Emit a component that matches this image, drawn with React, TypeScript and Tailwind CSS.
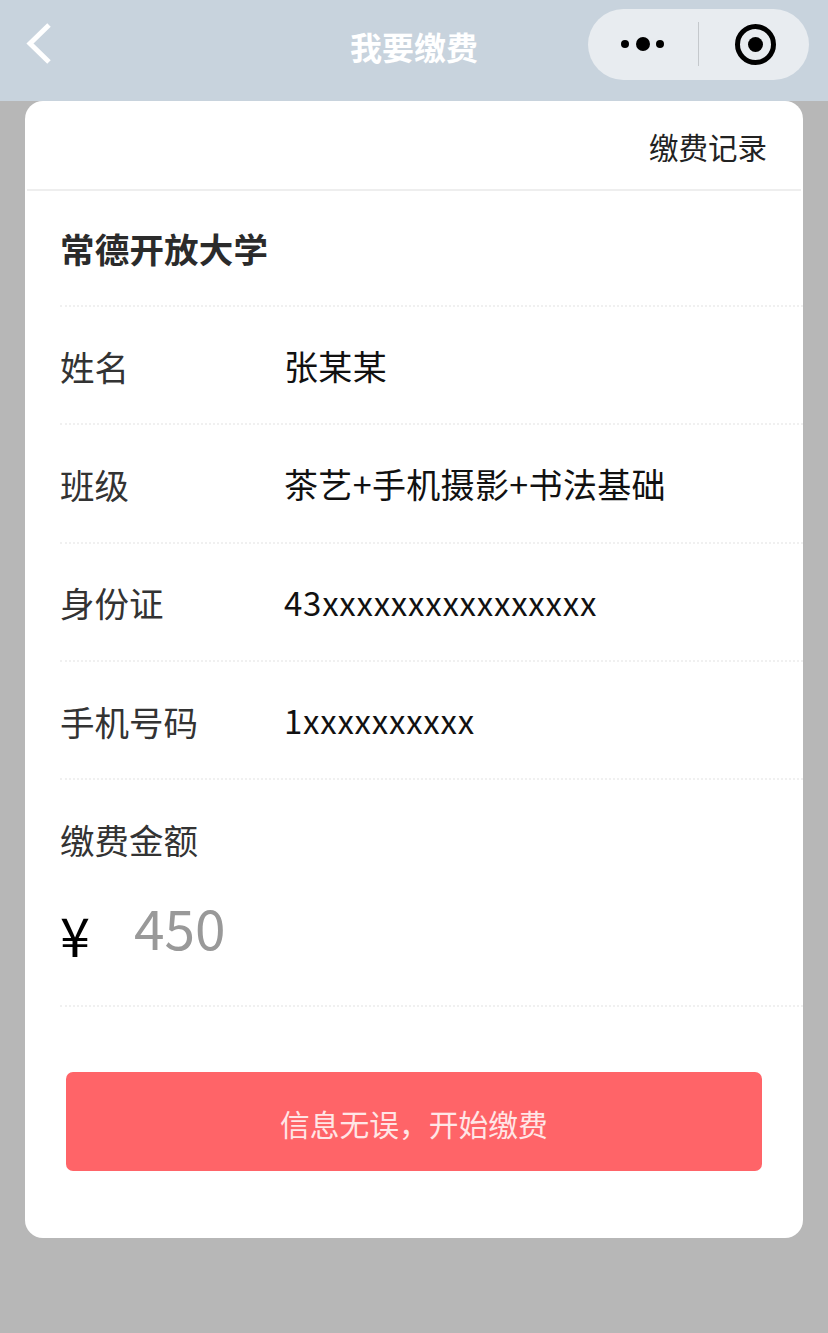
const FONT = "font-['Noto_Sans_CJK_SC','Liberation_Sans',sans-serif]";

function Row({ label, value, latin }: { label: string; value: string; latin?: boolean }) {
  return (
    <div className="flex h-[118.25px] items-center border-b-2 border-dotted border-[#f0f0f0] pt-[2px] leading-none">
      <span className="w-[224px] shrink-0 text-[34.5px] text-[#333333]">{label}</span>
      {latin ? (
        <span className="text-[33px] tracking-[0.75px] text-[#111111]">{value}</span>
      ) : (
        <span className="text-[34px] tracking-[0.35px] text-[#111111]">{value}</span>
      )}
    </div>
  );
}

export default function App() {
  return (
    <div className={`${FONT} flex h-[1333px] w-[828px] flex-col overflow-hidden bg-[#b7b7b7]`}>
      <header className="relative flex h-[101px] shrink-0 items-center justify-center bg-[#c8d3dd] pb-[10px]">
        <svg className="absolute left-[23px] top-[20px]" width="32" height="48" viewBox="0 0 32 48" fill="none">
          <path d="M26 5 L7 23.5 L26 42" stroke="#ffffff" strokeWidth="5" />
        </svg>
        <span className="text-[32px] font-bold leading-none text-white">我要缴费</span>
        <div className="absolute left-[588px] top-[9px] flex h-[71px] w-[221px] items-center rounded-full bg-[#e8ecf0] pb-[1px]">
          <div className="flex w-[110px] items-center justify-center gap-[6.5px] pr-[1px]">
            <span className="h-[8px] w-[8px] rounded-full bg-black" />
            <span className="h-[14px] w-[14px] rounded-full bg-black" />
            <span className="h-[8px] w-[8px] rounded-full bg-black" />
          </div>
          <span className="h-[44px] w-px bg-[#c4c8cc]" />
          <div className="flex flex-1 items-center justify-center pl-[2px]">
            <span className="flex h-[41px] w-[41px] items-center justify-center rounded-full border-[5px] border-black">
              <span className="h-[15px] w-[15px] rounded-full bg-black" />
            </span>
          </div>
        </div>
      </header>

      <main className="ml-[25px] h-[1137px] w-[778px] rounded-[18px] bg-white">
        <div className="mx-[2px] flex h-[90px] items-center justify-end border-b-2 border-[#eeeeee] pr-[34px] pt-[3px] text-[29.5px] leading-none text-[#222222]">
          缴费记录
        </div>
        <div className="pl-[35px]">
          <div className="flex h-[116px] items-center border-b-2 border-dotted border-[#f0f0f0] text-[34.5px] font-bold leading-none tracking-[0.2px] text-[#2b2b2b]">
            <span>常德开放大学</span>
          </div>
          <Row label="姓名" value="张某某" />
          <Row label="班级" value="茶艺+手机摄影+书法基础" />
          <Row label="身份证" value="43xxxxxxxxxxxxxxxx" latin />
          <Row label="手机号码" value="1xxxxxxxxxx" latin />
          <div className="h-[227px] border-b-2 border-dotted border-[#f0f0f0] pt-[42px]">
            <div className="text-[34.5px] leading-none text-[#333333]">缴费金额</div>
            <div className="mt-[42px] flex items-start">
              <span className="mt-[8px] w-[74px] text-[54px] leading-none text-black">¥</span>
              <span className="text-[55px] leading-none text-[#999999]">450</span>
            </div>
          </div>
        </div>
        <button className="mx-[41px] mt-[65px] flex h-[99px] w-[696px] items-center justify-center rounded-[7px] bg-[#ff6468] pt-[4px] text-[29.75px] leading-none text-[#ffe6e6]">
          信息无误，开始缴费
        </button>
      </main>
    </div>
  );
}
